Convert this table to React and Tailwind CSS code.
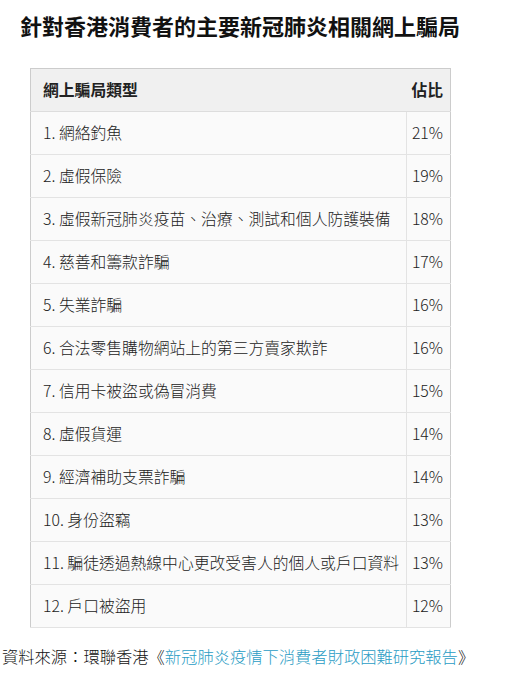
const rows = [
  ["1. 網絡釣魚", "21%"],
  ["2. 虛假保險", "19%"],
  ["3. 虛假新冠肺炎疫苗、治療、測試和個人防護裝備", "18%"],
  ["4. 慈善和籌款詐騙", "17%"],
  ["5. 失業詐騙", "16%"],
  ["6. 合法零售購物網站上的第三方賣家欺詐", "16%"],
  ["7. 信用卡被盜或偽冒消費", "15%"],
  ["8. 虛假貨運", "14%"],
  ["9. 經濟補助支票詐騙", "14%"],
  ["10. 身份盜竊", "13%"],
  ["11. 騙徒透過熱線中心更改受害人的個人或戶口資料", "13%"],
  ["12. 戶口被盜用", "12%"],
];

const App = () => {
  return (
    <div className="w-[509px] h-[685px] bg-white text-[#333] font-['Noto_Sans_CJK_TC','Noto_Sans',sans-serif]">
      <h1 className="pl-[20px] pt-[9px] text-[22px] leading-[32px] font-bold text-[#111]">
        針對香港消費者的主要新冠肺炎相關網上騙局
      </h1>
      <div className="pl-[30px] pt-[27px]">
        <table className="w-[421px] border-collapse border border-[#ccc] text-[15.8px]">
          <thead>
            <tr className="h-[43px] bg-[#f0f0f0]">
              <th className="pl-[12px] text-left font-bold text-[#222] border-b border-[#ddd]">網上騙局類型</th>
              <th className="pr-[7px] text-right font-bold text-[#222] border-b border-[#ddd]">佔比</th>
            </tr>
          </thead>
          <tbody>
            {rows.map(([name, pct]) => (
              <tr key={name} className="h-[43px] bg-[#fafafa]">
                <td className="pl-[12px] pr-[2px] font-light text-[#222] border-b border-[#e3e3e3] whitespace-nowrap">{name}</td>
                <td className="w-[44px] pl-[5px] pr-[7px] text-right font-light text-[#222] border-b border-l border-[#e3e3e3]">{pct}</td>
              </tr>
            ))}
          </tbody>
        </table>
      </div>
      <p className="pl-[2px] pt-[16px] text-[16.3px] leading-[24px] font-light text-[#111]">
        資料來源：環聯香港《<span className="text-[#2a9cc4]">新冠肺炎疫情下消費者財政困難研究報告</span>》
      </p>
    </div>
  );
};

export default App;
